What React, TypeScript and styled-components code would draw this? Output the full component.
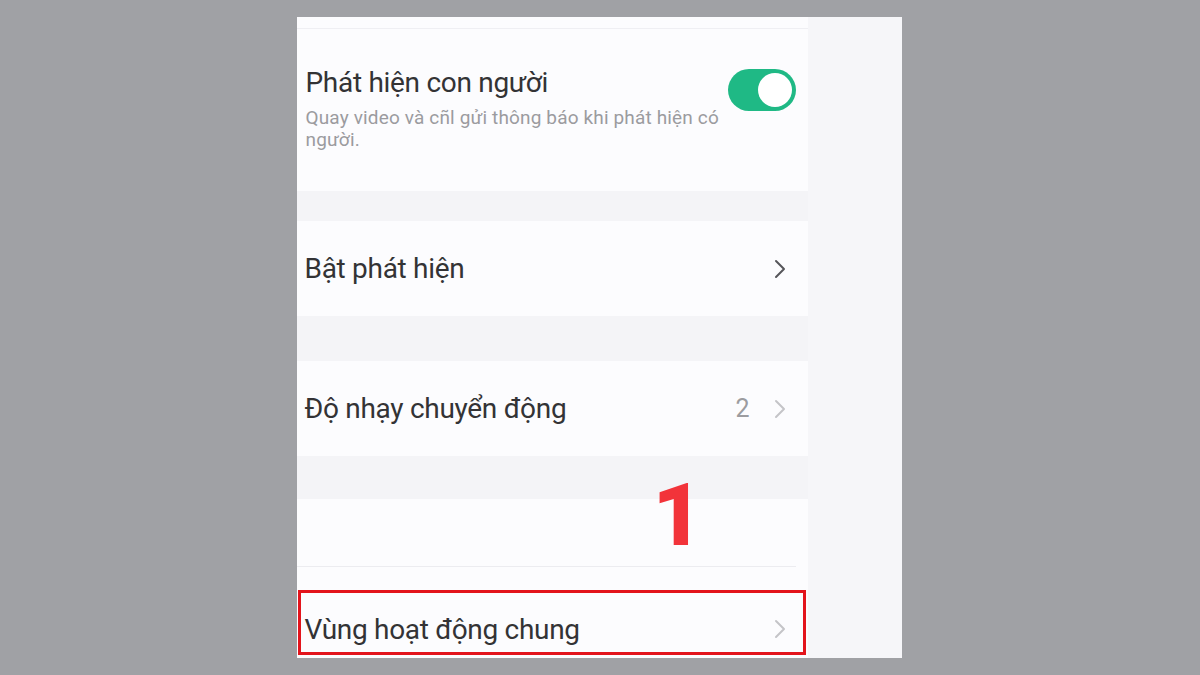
import React from 'react';
import styled, { createGlobalStyle } from 'styled-components';

const GlobalStyle = createGlobalStyle`
  html, body {
    margin: 0;
    padding: 0;
    background: #a0a1a5;
    font-family: Roboto, "Noto Sans", "Liberation Sans", sans-serif;
  }
`;

const Page = styled.div`
  width: 1200px;
  height: 675px;
  display: flex;
  justify-content: center;
  padding-top: 17px;
  box-sizing: border-box;
`;

const Screen = styled.div`
  position: relative;
  width: 605px;
  height: 641px;
  margin-left: -2px;
  display: flex;
  overflow: hidden;
`;

const List = styled.div`
  width: 511px;
  display: flex;
  flex-direction: column;
  background: #fcfcfe;

  & > * {
    flex-shrink: 0;
  }
`;

const Side = styled.div`
  flex: 1;
  background: #f6f6f9;
`;

const TopStrip = styled.div`
  height: 11px;
  border-bottom: 1px solid #efeff3;
`;

const Gap = styled.div<{ $h: number }>`
  height: ${p => p.$h}px;
  background: #f4f4f7;
`;

const SwitchCard = styled.div`
  height: 162px;
  box-sizing: border-box;
  display: flex;
  align-items: flex-start;
  padding: 37px 12px 0 9px;
  gap: 8px;
`;

const TextBlock = styled.div`
  flex: 1;
`;

const Title = styled.div`
  font-size: 28px;
  line-height: 34px;
  letter-spacing: -0.3px;
  color: #333335;
`;

const SubText = styled.div`
  margin-top: 7px;
  max-width: 420px;
  font-size: 19px;
  line-height: 22px;
  letter-spacing: 0.15px;
  color: #9b9b9f;
`;

const Toggle = styled.div<{ $on: boolean }>`
  margin-top: 3px;
  width: 68px;
  height: 42px;
  border-radius: 21px;
  background: ${p => (p.$on ? '#1fb985' : '#d0d0d4')};
  display: flex;
  align-items: center;
  justify-content: ${p => (p.$on ? 'flex-end' : 'flex-start')};
  padding: 0 4px;
  box-sizing: border-box;
  flex-shrink: 0;
`;

const Knob = styled.div`
  width: 34px;
  height: 34px;
  border-radius: 50%;
  background: #fff;
`;

const Row = styled.div<{ $h: number }>`
  height: ${p => p.$h}px;
  display: flex;
  align-items: center;
  padding: 0 22px 0 8px;
  box-sizing: border-box;
`;

const Label = styled.div`
  flex: 1;
  font-size: 28px;
  letter-spacing: -0.3px;
  color: #333335;
`;

const Value = styled.span`
  font-size: 25px;
  color: #9c9ca0;
  margin-right: 24px;
`;

const BlankRow = styled.div`
  height: 67px;
  margin-right: 12px;
  border-bottom: 1px solid #ececf0;
`;

const Highlight = styled.div`
  position: absolute;
  left: 1px;
  top: 573px;
  width: 508px;
  height: 65px;
  border: 3px solid #e3141c;
  box-sizing: border-box;
`;

const StepNumber = styled.div`
  position: absolute;
  left: 356px;
  top: 455px;
  font-size: 87px;
  line-height: 1;
  font-weight: 900;
  color: #f2333a;
`;

const Chevron = ({ light }: { light?: boolean }) => (
  <svg width="12" height="20" viewBox="0 0 12 20">
    <path
      d="M2 2 L10 10 L2 18"
      fill="none"
      stroke={light ? '#c4c4c8' : '#55555a'}
      strokeWidth="2"
      strokeLinecap="round"
      strokeLinejoin="round"
    />
  </svg>
);

const App = () => {
  return (
    <>
      <GlobalStyle />
      <Page>
        <Screen>
          <List>
            <TopStrip />
            <SwitchCard>
              <TextBlock>
                <Title>Phát hiện con người</Title>
                <SubText>Quay video và cñl gửi thông báo khi phát hiện có người.</SubText>
              </TextBlock>
              <Toggle $on>
                <Knob />
              </Toggle>
            </SwitchCard>
            <Gap $h={30} />
            <Row $h={95}>
              <Label>Bật phát hiện</Label>
              <Chevron />
            </Row>
            <Gap $h={45} />
            <Row $h={95}>
              <Label>Độ nhạy chuyển động</Label>
              <Value>2</Value>
              <Chevron light />
            </Row>
            <Gap $h={43} />
            <BlankRow />
            <Row $h={124}>
              <Label>Vùng hoạt động chung</Label>
              <Chevron light />
            </Row>
          </List>
          <Side />
          <Highlight />
          <StepNumber>1</StepNumber>
        </Screen>
      </Page>
    </>
  );
};

export default App;
